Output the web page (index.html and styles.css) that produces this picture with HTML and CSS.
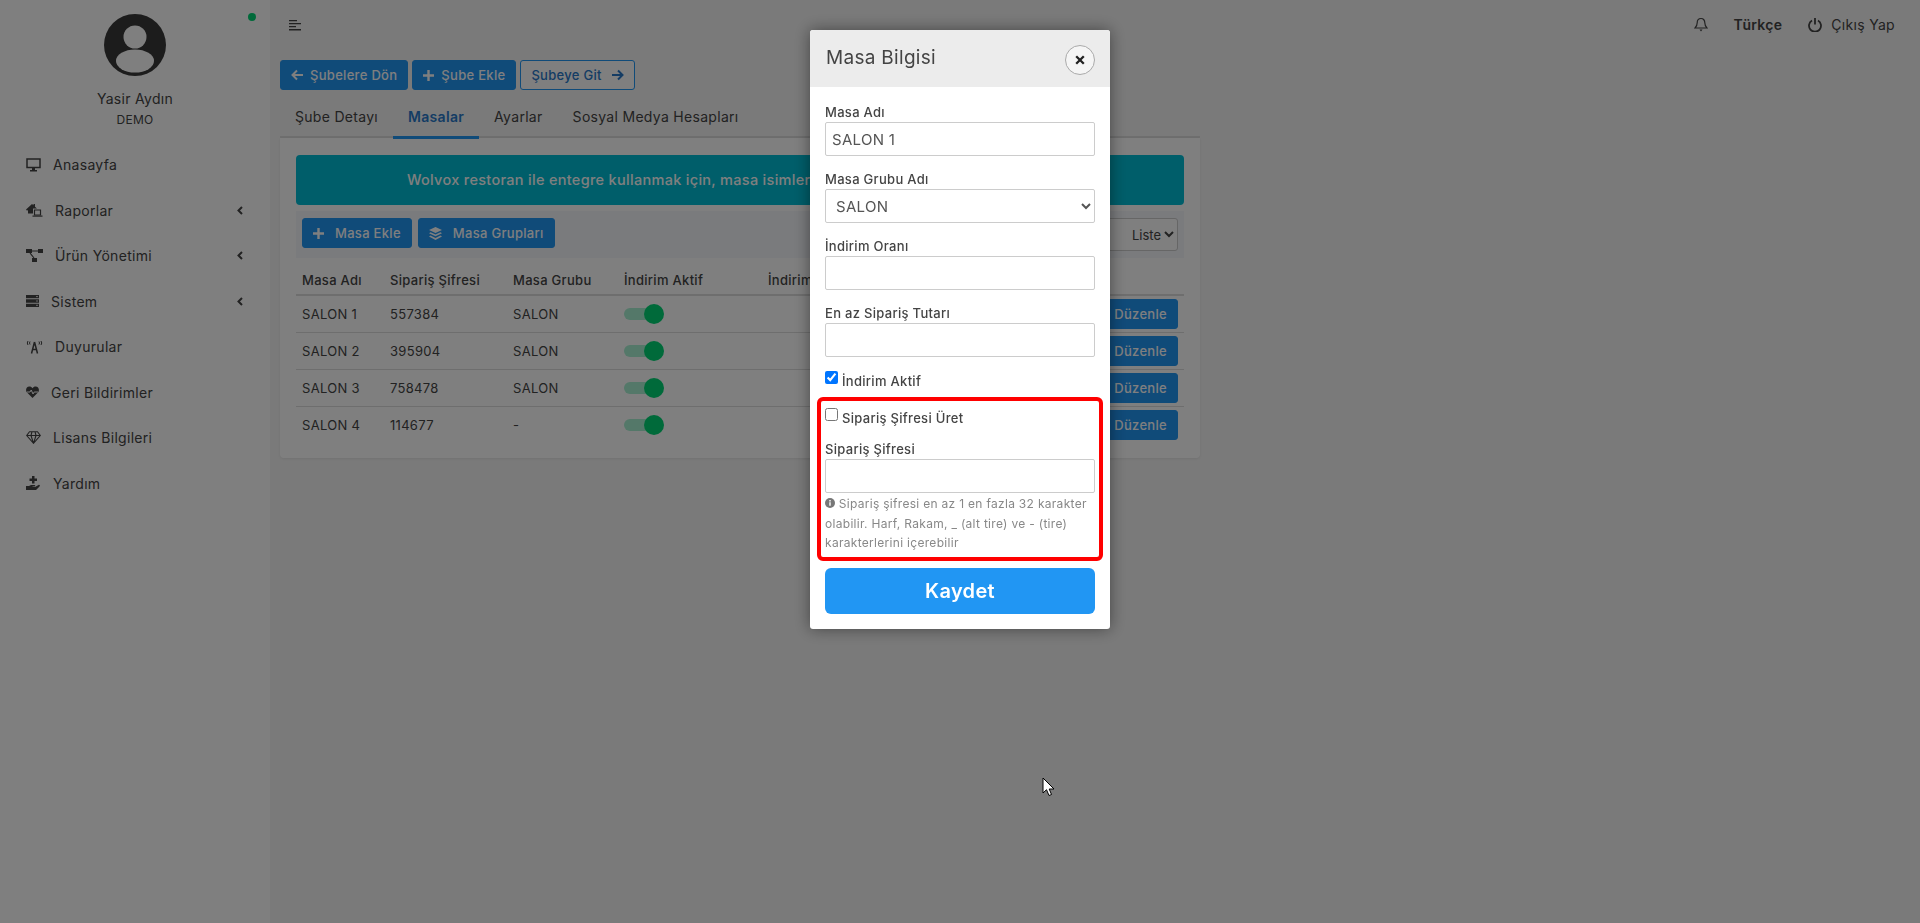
FILE: index.html
```html
<!DOCTYPE html>
<html lang="tr">
<head>
    <meta charset="UTF-8">
    <meta name="viewport" content="width=device-width, initial-scale=1.0">
    <title>Masa Bilgisi</title>
    <link rel="stylesheet" href="styles.css">
</head>
<body>
    <aside class="sidebar">
        <span class="online-dot"></span>
        <svg class="avatar" width="62" height="62" viewBox="0 0 62 62">
            <circle cx="31" cy="31" r="31" fill="#383838"/>
            <circle cx="31" cy="23" r="11.5" fill="#fff"/>
            <ellipse cx="31" cy="47" rx="19" ry="11.5" fill="#fff"/>
        </svg>
        <div class="user-name">Yasir Aydın</div>
        <div class="user-role">DEMO</div>
        <nav class="menu">
            <a class="menu-item">
                <svg width="15" height="14" viewBox="0 0 15 14"><path d="M1 1h13v8.500H1z" fill="none" stroke="currentColor" stroke-width="1.500"/><path d="M6 10h3v2H6zM4 12h7v1.500H4z" fill="currentColor"/></svg>
                <span>Anasayfa</span>
            </a>
            <a class="menu-item">
                <svg width="17" height="14" viewBox="0 0 17 14"><path d="M0 6.500 6 1l1.500 1.300V1H9v2.800l2 1.800H7v5H2V7l-1 .8z" fill="currentColor"/><path d="M8.500 7h6v5h-6z" fill="none" stroke="currentColor" stroke-width="1.200"/><path d="M6.500 12.500h10v1.200h-10z" fill="currentColor"/></svg>
                <span>Raporlar</span>
                <svg class="chev" width="6" height="9" viewBox="0 0 6 9"><path d="M5 1 1.500 4.500 5 8" fill="none" stroke="currentColor" stroke-width="2"/></svg>
            </a>
            <a class="menu-item">
                <svg width="17" height="13" viewBox="0 0 17 13"><path d="M0 0h6v4H0zM12 0h5v4h-5zM6 9h5v4H6z" fill="currentColor"/><path d="M6 2h6M4 4l4 5" stroke="currentColor" stroke-width="1.200"/></svg>
                <span>Ürün Yönetimi</span>
                <svg class="chev" width="6" height="9" viewBox="0 0 6 9"><path d="M5 1 1.500 4.500 5 8" fill="none" stroke="currentColor" stroke-width="2"/></svg>
            </a>
            <a class="menu-item">
                <svg width="13" height="12" viewBox="0 0 13 12"><path d="M0 0h13v3.300H0zM0 4.300h13v3.400H0zM0 8.700h13V12H0z" fill="currentColor"/><path d="M10 1.600h2M10 6h2M10 10.300h2" stroke="#fff" stroke-width=".8"/></svg>
                <span>Sistem</span>
                <svg class="chev" width="6" height="9" viewBox="0 0 6 9"><path d="M5 1 1.500 4.500 5 8" fill="none" stroke="currentColor" stroke-width="2"/></svg>
            </a>
            <a class="menu-item">
                <svg width="17" height="14" viewBox="0 0 17 14"><path d="M2 1Q.5 3 2 5M4 1.500Q3 3 4 4.500M15 1q1.500 2 0 4M13 1.500q1 1.500 0 3" fill="none" stroke="currentColor" stroke-width="1"/><path d="M8.500 2 5.500 13.500M8.500 2l3 11.500M6.500 9.500h4" fill="none" stroke="currentColor" stroke-width="1.500"/></svg>
                <span>Duyurular</span>
            </a>
            <a class="menu-item">
                <svg width="13" height="12" viewBox="0 0 13 12"><path d="M6.500 12 .8 6.300C-.8 4 .3.500 3.400.500c1.300 0 2.400.7 3.100 1.700C7.200 1.200 8.300.500 9.600.500c3.100 0 4.200 3.500 2.600 5.800z" fill="currentColor"/><path d="M1 6h3l1.200-2L7 8l1.200-2H12" fill="none" stroke="#fff" stroke-width="1"/></svg>
                <span>Geri Bildirimler</span>
            </a>
            <a class="menu-item">
                <svg width="15" height="13" viewBox="0 0 15 13"><path d="M3.500.700h8L14.300 4.500 7.500 12.300.7 4.500zM.7 4.500h13.600M5 4.500l2.500 7.800L10 4.500M5 4.500 6 .7M10 4.500 9 .7" fill="none" stroke="currentColor" stroke-width="1.100"/></svg>
                <span>Lisans Bilgileri</span>
            </a>
            <a class="menu-item">
                <svg width="15" height="14" viewBox="0 0 15 14"><path d="M6 0h2.500v2.500H11V5H8.500v2.500H6V5H3.500V2.500H6z" fill="currentColor"/><path d="M0 10h3l2-1h3.500c1 0 1 1.500 0 1.500H6.500v.5H9l3.500-2c1-.5 2 .6 1 1.500L10 14H0z" fill="currentColor"/></svg>
                <span>Yardım</span>
            </a>
        </nav>
    </aside>

    <main class="main">
        <header class="topbar">
            <svg class="toggle-icon" width="12" height="12" viewBox="0 0 12 12"><path d="M0 1h8v1.300H0zM0 4h12v1.300H0zM0 7h7v1.300H0zM0 10h12v1.500H0z" fill="#444"/></svg>
            <div class="topbar-right">
                <svg width="14" height="15" viewBox="0 0 14 15"><path d="M7 1.500c-2.500 0-3.800 2-3.800 4.200 0 3-1 4-2.200 5.300h12c-1.200-1.300-2.200-2.300-2.200-5.300C10.800 3.500 9.500 1.500 7 1.500z" fill="none" stroke="#444" stroke-width="1.200"/><path d="M5.500 12.500h3L7 14.500z" fill="#444"/></svg>
                <span class="lang">Türkçe</span>
                <span class="logout">
                    <svg width="14" height="15" viewBox="0 0 14 15"><path d="M4 3.500a6 6 0 1 0 6 0" fill="none" stroke="#444" stroke-width="1.800"/><path d="M7 1v6.500" stroke="#444" stroke-width="1.800"/></svg>
                    Çıkış Yap
                </span>
            </div>
        </header>

        <div class="page-actions">
            <button class="btn">
                <svg width="12" height="12" viewBox="0 0 12 12"><path d="M6 1.500 1.500 6 6 10.500M2 6h10" fill="none" stroke="#fff" stroke-width="2"/></svg>
                Şubelere Dön
            </button>
            <button class="btn">
                <svg width="11" height="11" viewBox="0 0 11 11"><path d="M5.500 0v11M0 5.500h11" stroke="#fff" stroke-width="2.400"/></svg>
                Şube Ekle
            </button>
            <button class="btn btn-outline">
                Şubeye Git
                <svg class="after-icon" width="12" height="12" viewBox="0 0 12 12"><path d="M6 1.500 10.500 6 6 10.500M10 6H0" fill="none" stroke="#2979c9" stroke-width="2"/></svg>
            </button>
        </div>

        <div class="tabs">
            <a class="tab">Şube Detayı</a>
            <a class="tab active">Masalar</a>
            <a class="tab">Ayarlar</a>
            <a class="tab">Sosyal Medya Hesapları</a>
        </div>

        <section class="card">
            <div class="alert">Wolvox restoran ile entegre kullanmak için, masa isimlerini birebir aynı olacak şekilde giriniz.</div>
            <div class="toolbar">
                <button class="btn">
                    <svg width="11" height="11" viewBox="0 0 11 11"><path d="M5.500 0v11M0 5.500h11" stroke="#fff" stroke-width="2.400"/></svg>
                    <span class="gap-left">Masa Ekle</span>
                </button>
                <button class="btn">
                    <svg width="13" height="13" viewBox="0 0 13 13"><path d="M6.500 0 13 3 6.500 6 0 3zM1.500 5.300 6.500 7.600l5-2.300L13 6.300 6.500 9.300 0 6.300zM1.500 8.600 6.500 10.900l5-2.300L13 9.600 6.500 13 0 9.600z" fill="#fff"/></svg>
                    <span class="gap-left">Masa Grupları</span>
                </button>
                <select class="list-select"><option>Liste</option></select>
            </div>
            <table class="tables">
                <thead>
                    <tr>
                        <th class="col-name">Masa Adı</th>
                        <th class="col-pass">Sipariş Şifresi</th>
                        <th class="col-group">Masa Grubu</th>
                        <th class="col-active">İndirim Aktif</th>
                        <th>İndirim Oranı</th>
                        <th></th>
                    </tr>
                </thead>
                <tbody>
                    <tr>
                        <td>SALON 1</td><td>557384</td><td>SALON</td>
                        <td><span class="switch"></span></td><td></td>
                        <td class="row-action"><button class="btn">Düzenle</button></td>
                    </tr>
                    <tr>
                        <td>SALON 2</td><td>395904</td><td>SALON</td>
                        <td><span class="switch"></span></td><td></td>
                        <td class="row-action"><button class="btn">Düzenle</button></td>
                    </tr>
                    <tr>
                        <td>SALON 3</td><td>758478</td><td>SALON</td>
                        <td><span class="switch"></span></td><td></td>
                        <td class="row-action"><button class="btn">Düzenle</button></td>
                    </tr>
                    <tr class="last">
                        <td>SALON 4</td><td>114677</td><td>-</td>
                        <td><span class="switch"></span></td><td></td>
                        <td class="row-action"><button class="btn">Düzenle</button></td>
                    </tr>
                </tbody>
            </table>
        </section>
    </main>

    <div class="backdrop">
        <div class="modal">
            <div class="modal-head">
                <h2>Masa Bilgisi</h2>
                <button class="close">
                    <svg width="10" height="10" viewBox="0 0 10 10"><path d="M1.200 1.200l7.600 7.600M8.800 1.200 1.200 8.800" stroke="#222" stroke-width="2.300"/></svg>
                </button>
            </div>
            <div class="modal-body">
                <label class="field-label">Masa Adı</label>
                <input class="field" type="text" value="SALON 1">
                <label class="field-label">Masa Grubu Adı</label>
                <select class="field field-select"><option>SALON</option></select>
                <label class="field-label">İndirim Oranı</label>
                <input class="field" type="text">
                <label class="field-label">En az Sipariş Tutarı</label>
                <input class="field" type="text">
                <label class="check-row"><input type="checkbox" checked> İndirim Aktif</label>
                <div class="highlight">
                    <label class="check-row"><input type="checkbox"> Sipariş Şifresi Üret</label>
                    <label class="field-label">Sipariş Şifresi</label>
                    <input class="field" type="text">
                    <p class="hint">
                        <svg width="10" height="10" viewBox="0 0 10 10"><circle cx="5" cy="5" r="5" fill="#777"/><path d="M4.300 4.300h1.400v3.400H4.300zM4.300 2h1.400v1.400H4.300z" fill="#fff"/></svg>
                        Sipariş şifresi en az 1 en fazla 32 karakter olabilir. Harf, Rakam, _ (alt tire) ve - (tire) karakterlerini içerebilir
                    </p>
                </div>
                <button class="save">Kaydet</button>
            </div>
        </div>
        <svg class="cursor" width="14" height="20" viewBox="0 0 14 20"><path d="M1 1v15l3.500-3.300L7 18.500l2.500-1L7.200 12H12z" fill="#fff" stroke="#000" stroke-width="1"/></svg>
    </div>
</body>
</html>
```

FILE: styles.css
```css
* {
    box-sizing: border-box;
}
html, body {
    height: 100%;
}
body {
    margin: 0;
    display: flex;
    font-family: Inter, "Noto Sans", sans-serif;
    font-size: 13px;
    letter-spacing: .3px;
    color: #444;
    background-color: #f5f5f5;
    overflow: hidden;
}

/* sidebar */
.sidebar {
    position: relative;
    width: 270px;
    flex: none;
    background: #fff;
    display: flex;
    flex-direction: column;
    align-items: center;
    padding-top: 14px;
}
.online-dot {
    position: absolute;
    top: 13px;
    left: 248px;
    width: 8px;
    height: 8px;
    border-radius: 50%;
    background: #00d474;
}
.user-name {
    margin-top: 14px;
    font-size: 14px;
    line-height: 18px;
}
.user-role {
    margin-top: 4px;
    font-size: 12px;
    line-height: 16px;
}
.menu {
    width: 100%;
    margin-top: 14px;
}
.menu-item {
    display: flex;
    align-items: center;
    gap: 12px;
    height: 45.5px;
    padding: 0 27px 0 26px;
    font-size: 14px;
}
.chev {
    margin-left: auto;
}

/* top */
.main {
    flex: 1;
    padding: 0 10px;
}
.topbar {
    display: flex;
    align-items: center;
    justify-content: space-between;
    height: 49px;
    padding: 0 15px 0 9px;
}
.topbar-right {
    display: flex;
    align-items: center;
    font-size: 14px;
}
.lang {
    margin-left: 26px;
    font-weight: 600;
}
.logout {
    display: flex;
    align-items: center;
    gap: 9px;
    margin-left: 26px;
}

/* buttons */
.btn {
    display: inline-flex;
    align-items: center;
    gap: 7px;
    height: 30px;
    padding: 0 10px;
    border: 1px solid #2196f3;
    border-radius: 3px;
    background: #2196f3;
    color: #fff;
    font: 500 13px Inter, "Noto Sans", sans-serif;
    letter-spacing: .3px;
}
.btn-outline {
    background: #fff;
    border-color: #2196f3;
    color: #2979c9;
}
.after-icon {
    margin-left: 3px;
}
.gap-left {
    margin-left: 4px;
}
.page-actions {
    display: flex;
    gap: 4px;
    margin-top: 11px;
}

/* tabs */
.tabs {
    display: flex;
    margin-top: 16px;
    height: 32px;
    width: 920px;
    border-bottom: 2px solid #ddd;
}
.tab {
    padding: 0 15px;
    font-size: 14px;
    line-height: 22px;
}
.tab.active {
    font-weight: 600;
    color: #2979c9;
    border-bottom: 3px solid #2196f3;
    height: 33px;
}

/* card */
.card {
    width: 920px;
    padding: 17px 16px 15px;
    background: #fff;
    border-radius: 0 0 4px 4px;
    box-shadow: 0 1px 3px rgba(0,0,0,0.08);
}
.alert {
    height: 50px;
    border-radius: 4px;
    background: #00bcd4;
    color: #fff;
    font-size: 14.5px;
    font-weight: 500;
    line-height: 50px;
    text-align: center;
}
.toolbar {
    display: flex;
    gap: 6px;
    height: 47px;
    margin-top: 6px;
    padding: 7px 6px;
    background: #f4f6fb;
}
.list-select {
    margin-left: auto;
    width: 130px;
    height: 33px;
    border: 1px solid #ccc;
    border-radius: 3px;
    background: #fff;
    color: #444;
    font: 13px Inter, "Noto Sans", sans-serif;
    text-align: right;
}

/* table */
.tables {
    width: 888px;
    table-layout: fixed;
    border-collapse: collapse;
}
.tables th {
    height: 37px;
    padding: 0 0 6px 6px;
    font-weight: 500;
    text-align: left;
    vertical-align: bottom;
    border-bottom: 2px solid #ddd;
    white-space: nowrap;
}
.tables td {
    height: 37px;
    padding: 0 0 0 6px;
    border-bottom: 1px solid #ddd;
}
.tables .last td {
    border-bottom: none;
}
.col-name {
    width: 88px;
}
.col-pass {
    width: 123px;
}
.col-group {
    width: 111px;
}
.col-active {
    width: 144px;
}
.row-action {
    text-align: right;
    padding-right: 6px !important;
}
.row-action .btn {
    padding: 0 10px 0 40px;
}
.switch {
    position: relative;
    display: block;
    width: 36px;
    height: 12px;
    border-radius: 6px;
    background: #a8f0d2;
}
.switch::after {
    content: "";
    position: absolute;
    top: -4px;
    right: -4px;
    width: 20px;
    height: 20px;
    border-radius: 50%;
    background: #00d474;
}

/* modal */
.backdrop {
    position: fixed;
    inset: 0;
    display: flex;
    justify-content: center;
    align-items: flex-start;
    padding-top: 30px;
    background: rgba(0,0,0,0.5);
}
.modal {
    width: 300px;
    background: #fff;
    border-radius: 3px;
    box-shadow: 0 0 16px rgba(0,0,0,0.45);
}
.modal-head {
    display: flex;
    align-items: flex-start;
    justify-content: space-between;
    height: 57px;
    padding: 16px 15px 0 16px;
    background: #ececec;
    border-radius: 3px 3px 0 0;
}
.modal-head h2 {
    margin: 0;
    font-size: 19px;
    font-weight: 400;
    line-height: 24px;
}
.close {
    display: flex;
    align-items: center;
    justify-content: center;
    width: 30px;
    height: 30px;
    margin-top: -1px;
    padding: 0;
    border: 1px solid #aaa;
    border-radius: 50%;
    background: #f5f5f5;
}
.modal-body {
    padding: 16px 15px 15px;
}
.field-label {
    display: block;
    font-size: 13px;
    font-weight: 500;
    line-height: 18px;
    margin-bottom: 1px;
}
.field {
    display: block;
    width: 100%;
    height: 34px;
    margin-bottom: 14px;
    padding: 0 6px;
    border: 1px solid #ccc;
    border-radius: 2px;
    background: #fff;
    color: #555;
    font: 15px Inter, "Noto Sans", sans-serif;
    letter-spacing: .3px;
}
.field-select {
    padding-left: 6px;
}
.check-row {
    display: flex;
    align-items: flex-start;
    height: 18px;
    font-size: 13px;
    font-weight: 500;
    line-height: 20px;
}
.check-row input {
    margin: 0 4px 0 0;
}
.highlight {
    margin: 8px -8px 0;
    padding: 7px 4px 4px;
    border: 4px solid #f00;
    border-radius: 6px;
}
.highlight .check-row {
    height: 32px;
}
.highlight .field {
    margin-bottom: 0;
}
.hint {
    margin: 0;
    padding-top: 1px;
    font-size: 12px;
    line-height: 19.5px;
    color: #888;
}
.save {
    display: block;
    width: 100%;
    height: 46px;
    margin-top: 7px;
    border: none;
    border-radius: 6px;
    background: #2196f3;
    color: #fff;
    font: 600 20px Inter, "Noto Sans", sans-serif;
    letter-spacing: .3px;
}
.cursor {
    position: absolute;
    left: 1042px;
    top: 777px;
}
```
